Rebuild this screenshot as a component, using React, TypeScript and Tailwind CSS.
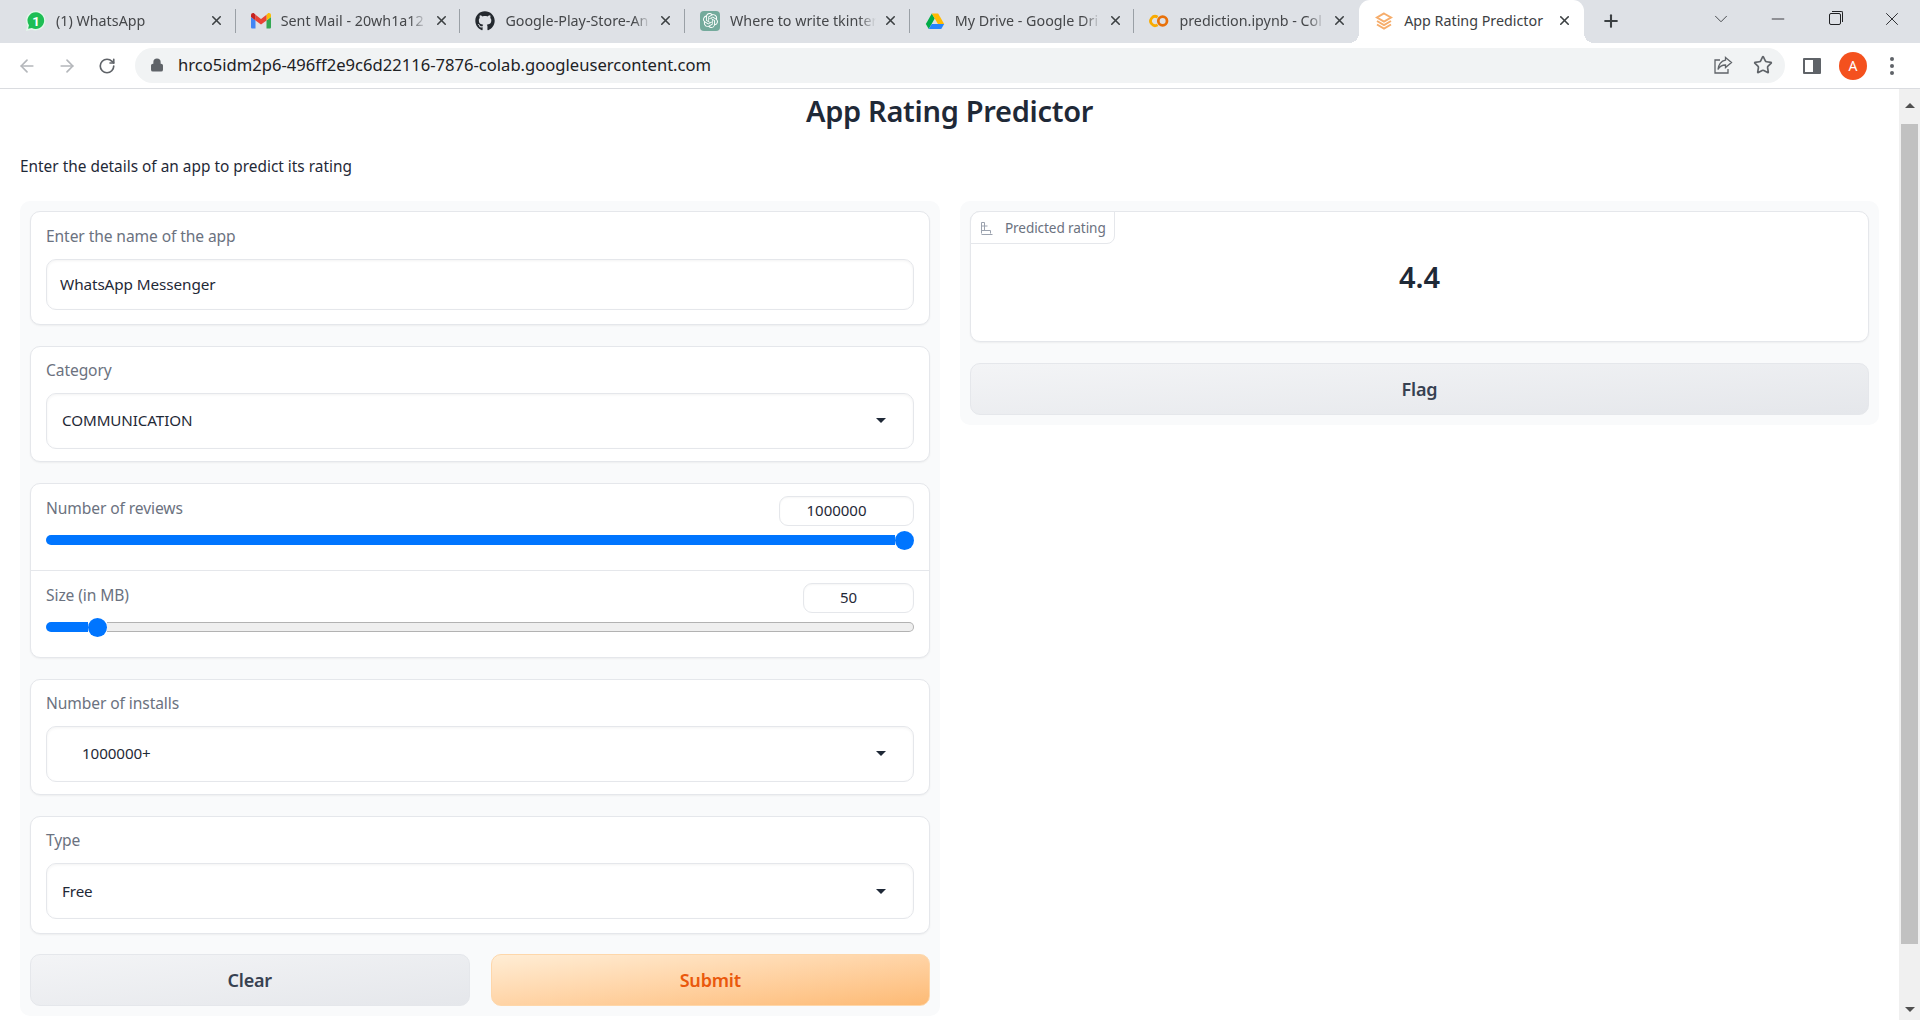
import type { ReactNode } from "react";
import { ArrowLeft, ArrowRight, ChevronDown, Lock, Minus, Plus, RotateCw, Star, X } from "lucide-react";
import { FaGithub } from "react-icons/fa";
import { SiOpenai } from "react-icons/si";

/* ---------------- FAVICONS ---------------- */

const WhatsAppIcon = () => (
  <svg width="22" height="22" viewBox="0 0 20 20" className="shrink-0">
    <path d="M10 .6a9 9 0 0 0-7.800 13.500L.8 19.200l5.300-1.300A9 9 0 1 0 10 .6z" fill="#e3f7ea" />
    <path d="M10 2a7.600 7.600 0 0 0-6.400 11.800l-.8 3.300 3.400-.8A7.600 7.600 0 1 0 10 2z" fill="#1ebe55" />
    <text x="10" y="14.500" textAnchor="middle" fontSize="12" fontWeight="700" fill="#fff" fontFamily="Roboto, sans-serif">
      1
    </text>
  </svg>
);

const GmailIcon = () => (
  <svg width="20" height="20" viewBox="0 0 24 24">
    <path d="M1.600 21h3.800v-9.700L0 7.200v12.200C0 20.300.7 21 1.600 21z" fill="#4285f4" />
    <path d="M18.600 21h3.800c.9 0 1.600-.7 1.600-1.600V7.200l-5.400 4.100z" fill="#34a853" />
    <path d="M18.600 4.500v6.800L24 7.200V5c0-2-2.300-3.200-3.900-2z" fill="#fbbc04" />
    <path d="M5.400 11.300V4.500l6.600 5 6.600-5v6.800L12 16.200z" fill="#ea4335" />
    <path d="M0 5v2.200l5.400 4.100V4.500L3.900 3C2.300 1.800 0 3 0 5z" fill="#c5221f" />
  </svg>
);

const DriveIcon = () => (
  <svg width="20" height="20" viewBox="0 0 24 24">
    <path d="M8.200 3 1 15.500l3.500 6L11.700 9z" fill="#00ac47" />
    <path d="M8.200 3h7.600L23 15.500h-7.500z" fill="#ffba00" />
    <path d="M4.500 21.500h15l3.500-6H8z" fill="#2684fc" />
  </svg>
);

const ColabIcon = () => (
  <svg width="22" height="20" viewBox="0 0 22 20">
    <path d="M9.500 5.800a5 5 0 1 0 0 8.400" fill="none" stroke="#f9ab00" strokeWidth="3" />
    <circle cx="15" cy="10" r="4.800" fill="none" stroke="#e8710a" strokeWidth="3" />
  </svg>
);

const GradioIcon = () => (
  <svg width="18" height="18" viewBox="0 0 18 18" fill="none" stroke="#f6ad6b" strokeWidth="2">
    <path d="M9 1.500 16 5.500 9 9.500 2 5.500z" />
    <path d="M2 9l7 4 7-4" />
    <path d="M2 12.500l7 4 7-4" />
  </svg>
);

const ChatGptIcon = () => (
  <div className="w-[20px] h-[20px] rounded-[4px] bg-[#74aa9c] flex items-center justify-center">
    <SiOpenai size={15} className="text-white" />
  </div>
);

const ShareIcon = () => (
  <svg width="20" height="20" viewBox="0 0 20 20" fill="none" stroke="#5f6368" strokeWidth="1.300">
    <path d="M7 5H2v13h13v-4" />
    <path d="M12.500 2.500 18.500 7.500l-6 5V10C9 10 6.500 11.500 5 14.500 5.300 10 8 5.800 12.500 5.200z" />
  </svg>
);

const ChartIcon = () => (
  <svg width="12" height="13" viewBox="0 0 12 13" fill="none" stroke="#9ca3af" strokeWidth="1">
    <path d="M.5.500h3v8.500" />
    <path d="M.5.500v11" />
    <path d="M.5 4h6" />
    <path d="M.5 8.500h9v3" />
    <path d="M.5 12.500h11" />
  </svg>
);

/* ---------------- BROWSER TABS ---------------- */

const tabs: { title: string; icon: ReactNode }[] = [
  { title: "(1) WhatsApp", icon: <WhatsAppIcon /> },
  { title: "Sent Mail - 20wh1a12", icon: <GmailIcon /> },
  { title: "Google-Play-Store-An", icon: <FaGithub size={20} className="text-[#24292f]" /> },
  { title: "Where to write tkinter", icon: <ChatGptIcon /> },
  { title: "My Drive - Google Dri", icon: <DriveIcon /> },
  { title: "prediction.ipynb - Col", icon: <ColabIcon /> },
];

const BrowserTab = ({ title, icon, sep }: { title: string; icon: ReactNode; sep: boolean }) => (
  <>
    <div className="w-[223.7px] h-full flex items-center pl-[15px] pb-[2px]">
      <div className="w-[20px] h-[20px] flex items-center justify-center shrink-0">{icon}</div>
      <span className="w-[146px] ml-[10px] shrink-0 overflow-hidden whitespace-nowrap text-[14.3px] text-[#45474a] [mask-image:linear-gradient(to_right,black_88%,transparent)]">
        {title}
      </span>
      <X size={15} strokeWidth={2.5} className="ml-[7px] shrink-0 text-[#3c4043]" />
    </div>
    <div className={`w-px h-[24px] -mt-[1px] ${sep ? "bg-[#9aa0a6]" : "bg-transparent"}`} />
  </>
);

const TabStrip = () => (
  <div className="h-[43px] bg-[#dee1e6] flex items-center pl-[11px] shrink-0">
    {tabs.map((t, i) => (
      <BrowserTab key={t.title} title={t.title} icon={t.icon} sep={i < 5} />
    ))}
    <div className="relative w-[225px] h-full bg-white rounded-t-[11px] flex items-center pl-[15px] pb-[2px] shrink-0">
      <div className="w-[20px] h-[20px] flex items-center justify-center shrink-0">
        <GradioIcon />
      </div>
      <span className="w-[146px] ml-[10px] shrink-0 whitespace-nowrap text-[14.3px] text-[#3c4043]">App Rating Predictor</span>
      <X size={15} strokeWidth={2.5} className="ml-[7px] shrink-0 text-[#3c4043]" />
      <span className="absolute bottom-0 -left-[10px] w-[10px] h-[10px] bg-[radial-gradient(circle_at_0_0,transparent_10px,white_10px)]" />
      <span className="absolute bottom-0 -right-[10px] w-[10px] h-[10px] bg-[radial-gradient(circle_at_100%_0,transparent_10px,white_10px)]" />
    </div>
    <Plus size={20} strokeWidth={2.5} className="ml-[17px] -mt-[2px] text-[#3c4043]" />
    <div className="ml-auto flex items-center h-full">
      <div className="w-[57px] flex justify-center">
        <ChevronDown size={22} strokeWidth={1} className="text-[#3c4043] -mt-[6px]" />
      </div>
      <div className="w-[57px] flex justify-center">
        <Minus size={20} strokeWidth={1} className="text-[#202124] -mt-[6px]" />
      </div>
      <div className="w-[57px] flex justify-center -mt-[6px]">
        <div className="relative w-[12px] h-[12px] border border-[#202124] rounded-[2px] bg-[#dee1e6]">
          <span className="absolute -top-[3px] -right-[3px] w-[11px] h-[11px] border-t border-r border-[#202124] rounded-tr-[2px]" />
        </div>
      </div>
      <div className="w-[57px] flex justify-center">
        <X size={22} strokeWidth={1} className="text-[#202124] -mt-[6px]" />
      </div>
    </div>
  </div>
);

const Toolbar = () => (
  <div className="h-[46px] bg-white border-b border-[#dadce0] flex items-center pl-[7px] shrink-0">
    <div className="w-[40px] flex justify-center">
      <ArrowLeft size={20} className="text-[#b4b7bb]" />
    </div>
    <div className="w-[40px] flex justify-center">
      <ArrowRight size={20} className="text-[#b4b7bb]" />
    </div>
    <div className="w-[40px] flex justify-center">
      <RotateCw size={18} strokeWidth={2.2} className="text-[#5f6368]" />
    </div>
    <div className="ml-[8px] w-[1650px] h-[35px] -mt-[1px] rounded-full bg-[#f1f3f4] flex items-center pl-[15px] pr-[12px]">
      <Lock size={14} strokeWidth={2.5} fill="#5f6368" className="text-[#5f6368]" />
      <span className="ml-[14px] pt-[1px] text-[16.6px] text-[#202124] whitespace-nowrap">hrco5idm2p6-496ff2e9c6d22116-7876-colab.googleusercontent.com</span>
      <div className="ml-auto flex items-center gap-[20px]">
        <ShareIcon />
        <Star size={20} strokeWidth={2} className="text-[#5f6368]" />
      </div>
    </div>
    <div className="ml-[18px] w-[18px] h-[16px] border-y-[2px] border-l-[2px] border-r-[8px] border-[#5f6368] rounded-[1px]" />
    <div className="ml-[18px] w-[28px] h-[28px] rounded-full bg-[#f4511e] flex items-center justify-center text-white text-[14px]">A</div>
    <div className="ml-[23px] flex flex-col gap-[3px]">
      <span className="w-[4px] h-[4px] rounded-full bg-[#5f6368]" />
      <span className="w-[4px] h-[4px] rounded-full bg-[#5f6368]" />
      <span className="w-[4px] h-[4px] rounded-full bg-[#5f6368]" />
    </div>
  </div>
);

/* ---------------- FORM PIECES ---------------- */

const Card = ({ className = "", children }: { className?: string; children: ReactNode }) => (
  <div className={`bg-white border border-[#e5e7eb] rounded-[10px] shadow-[0_1px_2px_rgba(0,0,0,0.05)] ${className}`}>{children}</div>
);

const Label = ({ children }: { children: ReactNode }) => (
  <div className="text-[15.6px] leading-[20px] text-[#6b7280] tracking-[-0.1px]">{children}</div>
);

const SelectField = ({ label, value, pad, className }: { label: string; value: string; pad: string; className: string }) => (
  <Card className={`${className} px-[15px] pt-[13px]`}>
    <Label>{label}</Label>
    <div className={`mt-[13px] h-[56px] border border-[#e5e7eb] rounded-[10px] shadow-[inset_0_1px_3px_rgba(0,0,0,0.05)] flex items-center pr-[27px] ${pad}`}>
      <span className="text-[15.2px] text-[#1f2937] tracking-[-0.1px]">{value}</span>
      <span className="ml-auto w-0 h-0 border-x-[5px] border-x-transparent border-t-[5px] border-t-[#1f2937]" />
    </div>
  </Card>
);

const SliderRow = ({ label, value, boxW, rowH, fill }: { label: string; value: string; boxW: string; rowH: string; fill: ReactNode }) => (
  <div className={`px-[15px] ${rowH}`}>
    <div className="pt-[12px] flex items-start justify-between h-[52px]">
      <div className="mt-[2px]">
        <Label>{label}</Label>
      </div>
      <div className={`${boxW} h-[30px] pr-[20px] border border-[#e5e7eb] rounded-[9px] shadow-[inset_0_1px_2px_rgba(0,0,0,0.04)] flex items-center justify-center text-[15px] text-[#1f2937]`}>
        {value}
      </div>
    </div>
    {fill}
  </div>
);

const BigButton = ({ className, children }: { className: string; children: ReactNode }) => (
  <div className={`h-[52px] rounded-[10px] border flex items-center justify-center text-[18px] font-semibold tracking-[-0.2px] ${className}`}>{children}</div>
);

/* ---------------- PAGE ---------------- */

export default function App() {
  return (
    <div className="h-screen w-full overflow-hidden bg-white flex flex-col font-['Noto_Sans',sans-serif]">
      <TabStrip />
      <Toolbar />
      <div className="flex-1 flex min-h-0">
        <div className="flex-1 min-w-0 px-[20px]">
          <h1 className="h-[44px] text-center text-[29px] leading-[43px] font-semibold text-[#1f2937] tracking-[-0.3px]">App Rating Predictor</h1>
          <p className="mt-[23px] h-[22px] text-[15.4px] leading-[22px] text-[#1f2937]">Enter the details of an app to predict its rating</p>
          <div className="mt-[23px] flex items-start gap-[20px]">
            {/* LEFT COLUMN */}
            <div className="w-[920px] h-[815px] bg-[#f9fafb] rounded-[10px] p-[10px] flex flex-col gap-[21px]">
              <Card className="h-[114px] px-[15px] pt-[14px]">
                <Label>Enter the name of the app</Label>
                <div className="mt-[13px] h-[51px] border border-[#e5e7eb] rounded-[10px] shadow-[inset_0_1px_3px_rgba(0,0,0,0.05)] flex items-center pl-[13px] text-[15.3px] text-[#1f2937] tracking-[-0.1px]">
                  WhatsApp Messenger
                </div>
              </Card>
              <SelectField label="Category" value="COMMUNICATION" pad="pl-[15px]" className="h-[116px]" />
              <Card className="h-[175px]">
                <SliderRow
                  label="Number of reviews"
                  value="1000000"
                  boxW="w-[135px]"
                  rowH="h-[86px]"
                  fill={
                    <div className="flex items-center h-[19px] -mt-[5px]">
                      <div className="flex-1 h-[10px] rounded-l-full bg-[#0075ff]" />
                      <div className="w-[19px] h-[19px] rounded-full bg-[#0075ff] shrink-0" />
                    </div>
                  }
                />
                <div className="border-t border-[#e5e7eb]" />
                <SliderRow
                  label="Size (in MB)"
                  value="50"
                  boxW="w-[111px]"
                  rowH="h-[87px]"
                  fill={
                    <div className="flex items-center h-[19px] -mt-[5px]">
                      <div className="w-[42px] h-[10px] rounded-l-full bg-[#0075ff]" />
                      <div className="w-[19px] h-[19px] rounded-full bg-[#0075ff] shrink-0" />
                      <div className="flex-1 h-[10px] rounded-r-full bg-[#efefef] border border-[#b2b2b2] border-l-0" />
                    </div>
                  }
                />
              </Card>
              <SelectField label="Number of installs" value="1000000+" pad="pl-[35px]" className="h-[117px]" />
              <SelectField label="Type" value="Free" pad="pl-[15px]" className="h-[118px]" />
              <div className="flex gap-[21px] -mt-[1px]">
                <BigButton className="flex-1 bg-linear-to-br from-[#f3f4f6] to-[#e5e7eb] border-[#e5e7eb] text-[#374151]">Clear</BigButton>
                <BigButton className="flex-1 bg-linear-to-br from-[#ffedd5] to-[#fdba74] border-[#fed7aa] text-[#ea580c]">Submit</BigButton>
              </div>
            </div>

            {/* RIGHT COLUMN */}
            <div className="flex-1 h-[224px] bg-[#f9fafb] rounded-[10px] p-[10px] flex flex-col gap-[21px]">
              <Card className="h-[131px] relative">
                <div className="absolute -top-px -left-px h-[33px] w-[145px] pt-[1px] bg-white border border-[#e5e7eb] rounded-tl-[10px] rounded-br-[8px] flex items-center pl-[10px] gap-[12px] text-[13.6px] text-[#6b7280] tracking-[-0.1px]">
                  <ChartIcon />
                  Predicted rating
                </div>
                <div className="h-full pt-[45px] text-center text-[29px] leading-[40px] font-semibold text-[#1f2937]">4.4</div>
              </Card>
              <BigButton className="bg-linear-to-br from-[#f3f4f6] to-[#e5e7eb] border-[#e5e7eb] text-[#374151]">Flag</BigButton>
            </div>
          </div>
        </div>

        {/* SCROLLBAR */}
        <div className="w-[21px] shrink-0 bg-[#f0f0f0] flex flex-col items-center">
          <div className="h-[37px] flex items-center justify-center -mt-[2px]">
            <span className="w-0 h-0 border-x-[5px] border-x-transparent border-b-[5px] border-b-[#505050]" />
          </div>
          <div className="w-[17px] h-[820px] bg-[#c1c1c1]" />
          <div className="flex-1 flex items-end pb-[8px]">
            <span className="w-0 h-0 border-x-[5px] border-x-transparent border-t-[5px] border-t-[#505050]" />
          </div>
        </div>
      </div>
    </div>
  );
}
